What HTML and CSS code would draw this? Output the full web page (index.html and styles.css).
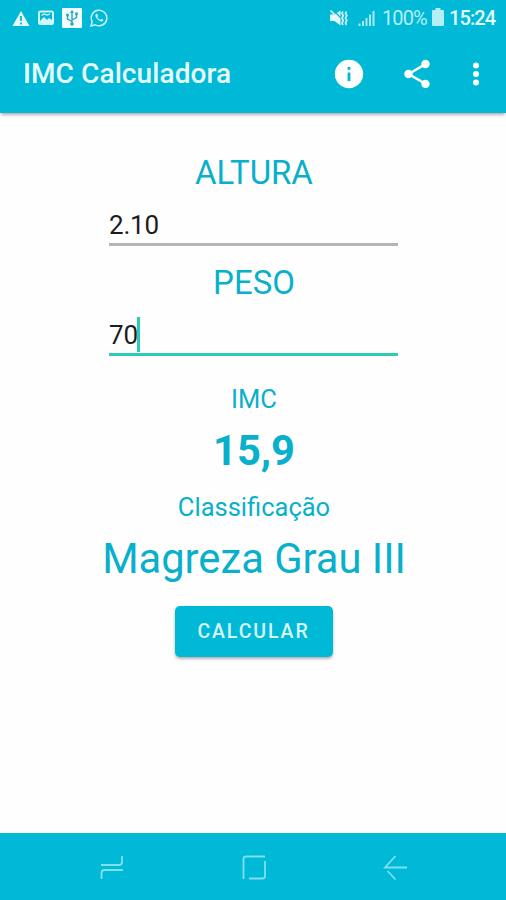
FILE: index.html
```html
<!DOCTYPE html>
<html lang="pt-BR">

<head>
    <meta charset="UTF-8">
    <meta name="viewport" content="width=device-width, initial-scale=1.0">
    <title>IMC Calculadora</title>
    <link rel="stylesheet" href="styles.css">
</head>

<body>
    <div class="status">
        <div class="status-icons">
            <svg width="18" height="17" viewBox="0 0 18 17">
                <path d="M9 1L17.5 16H.5z" fill="#e6fafd"/>
                <path d="M9 6v5M9 12.6v1.8" stroke="#00b9d7" stroke-width="1.8"/>
            </svg>
            <svg width="16" height="16" viewBox="0 0 16 16">
                <rect x="1" y="1.5" width="14" height="12.5" rx="1.5" fill="none" stroke="#d4f5fa" stroke-width="2"/>
                <path d="M2 11l4-4 3 3 2-2 3 2v3H2z" fill="#d4f5fa"/>
                <path d="M3.5 5.5L6 4l3 1 3-1" fill="none" stroke="#d4f5fa" stroke-width="1.2"/>
            </svg>
            <svg width="20" height="20" viewBox="0 0 20 20">
                <rect width="20" height="20" rx="1" fill="#f2fdff"/>
                <path d="M10 4v12M10 13.5L5.5 11V7M10 12l4.5-2.5V6" fill="none" stroke="#2ca6bb" stroke-width="1.4"/>
                <path d="M10 1.8L12 5H8z" fill="#2ca6bb"/>
                <circle cx="10" cy="16" r="1.8" fill="#2ca6bb"/>
                <circle cx="5.5" cy="7" r="1.5" fill="#2ca6bb"/>
                <path d="M13.2 4.500h2.600v2.600h-2.600z" fill="#2ca6bb"/>
            </svg>
            <svg width="18" height="18" viewBox="0 0 18 18">
                <path d="M1 17l1.200-4.300A7.800 7.800 0 1 1 5.300 15.800z" fill="none" stroke="#c8f1f8" stroke-width="1.500"/>
                <path d="M6.200 4.800c-1.500 1-1 3 .8 5s4 3.400 5.600 2.400c1-.7.700-1.500.4-1.700l-1.600-.8-1.200 1C9 10.300 8 9.300 7.400 8l.8-1-.7-1.800c-.2-.5-.8-.6-1.300-.4z" fill="#c8f1f8"/>
            </svg>
        </div>
        <div class="status-info">
            <svg width="19" height="18" viewBox="0 0 19 18">
                <path d="M1 5.500h4.500l6-4v15l-6-4.500H1z" fill="#e2fafd"/>
                <path d="M4.500 1.500l7.500 7.500" stroke="#00b9d7" stroke-width="1.200"/>
                <path d="M1.500 1.500l4 4" stroke="#e2fafd" stroke-width="1.600"/>
                <path d="M14 2.500L13 4.500l1.300 2L13 9l1.300 2.500L13 14l1 2M17.500 2.500l-1 2 1.300 2L16.500 9l1.300 2.500-1.300 2.500 1 2" fill="none" stroke="#c8f3f9" stroke-width="1.700"/>
            </svg>
            <svg class="signal" width="17" height="17" viewBox="0 0 17 17">
                <path d="M1.500 16v-2.500M5 16v-5M8.500 16V8M12 16V4.500M15.500 16V1" stroke="#a8e9f3" stroke-width="2"/>
            </svg>
            <span class="percent">100%</span>
            <svg class="battery" width="12" height="18" viewBox="0 0 12 18">
                <path d="M3.500 0h5v2H11a1 1 0 0 1 1 1v14a1 1 0 0 1-1 1H1a1 1 0 0 1-1-1V3a1 1 0 0 1 1-1h2.500z" fill="#b5eef6"/>
            </svg>
            <span class="clock">15:24</span>
        </div>
    </div>

    <header class="toolbar">
        <h1 class="title">IMC Calculadora</h1>
        <div class="actions">
            <svg width="34" height="34" viewBox="0 0 24 24" fill="#fff">
                <path d="M12 2a10 10 0 1 0 0 20 10 10 0 0 0 0-20zm1 15h-2v-6h2zm0-8h-2V7h2z"/>
            </svg>
            <svg width="34" height="34" viewBox="0 0 24 24" fill="#fff">
                <path d="M18 16.080c-.76 0-1.440.3-1.960.770L8.910 12.700c.05-.230.090-.460.090-.700s-.04-.470-.09-.700l7.050-4.110c.54.5 1.250.810 2.040.810 1.660 0 3-1.340 3-3s-1.340-3-3-3-3 1.340-3 3c0 .240.040.470.090.700L8.040 9.810C7.500 9.310 6.790 9 6 9c-1.660 0-3 1.340-3 3s1.340 3 3 3c.79 0 1.500-.31 2.040-.81l7.120 4.160c-.05.210-.08.430-.08.650 0 1.610 1.310 2.920 2.920 2.920s2.920-1.310 2.920-2.920-1.310-2.920-2.920-2.920z"/>
            </svg>
            <svg width="34" height="34" viewBox="0 0 24 24" fill="#fff">
                <circle cx="12" cy="6" r="2.100"/>
                <circle cx="12" cy="12" r="2.100"/>
                <circle cx="12" cy="18" r="2.100"/>
            </svg>
        </div>
    </header>

    <main class="content">
        <div class="label">ALTURA</div>
        <div class="field">2.10</div>
        <div class="label peso">PESO</div>
        <div class="field active">70<span class="cursor"></span></div>
        <div class="caption">IMC</div>
        <div class="result bold">15,9</div>
        <div class="caption class-caption">Classificação</div>
        <div class="result">Magreza Grau III</div>
        <button class="calcular">CALCULAR</button>
    </main>

    <nav class="navbar">
        <svg width="26" height="28" viewBox="0 0 26 28">
            <path d="M2 12h18q3 0 3-3V3M2.500 26v-6q0-3 3-3H24"/>
        </svg>
        <svg width="26" height="28" viewBox="0 0 26 28">
            <path d="M2.500 26V6q0-2.500 2.500-2.500h19M24 8v15q0 2.500-2.500 2.500H8"/>
        </svg>
        <svg width="26" height="28" viewBox="0 0 26 28">
            <path d="M13.500 3L3 14.500H25M5.500 18l8 8.500"/>
        </svg>
    </nav>
</body>

</html>
```

FILE: styles.css
```css
* {
    box-sizing: border-box;
}
body {
    margin: 0;
    height: 900px;
    display: flex;
    flex-direction: column;
    background: #fefefe;
    font-family: Roboto, "Liberation Sans", sans-serif;
    color: #08b0cb;
}
svg {
    display: block;
    flex: none;
}
.status {
    height: 36px;
    padding: 0 11px 0 12px;
    display: flex;
    justify-content: space-between;
    align-items: center;
    background: #00b9d7;
}
.status-icons {
    display: flex;
    align-items: center;
    gap: 8px;
}
.status-info {
    display: flex;
    align-items: center;
    font-size: 20px;
    line-height: 36px;
}
.signal {
    margin: 0 7px 0 10px;
}
.percent {
    width: 44px;
    letter-spacing: -0.9px;
    color: #b5eef6;
}
.battery {
    margin: 0 5px 2px 6px;
}
.clock {
    width: 46px;
    font-weight: 500;
    letter-spacing: -0.9px;
    color: #e2fafd;
}
.toolbar {
    height: 77px;
    padding: 0 13px 1px 23px;
    display: flex;
    justify-content: space-between;
    align-items: center;
    background: #00b9d7;
    box-shadow: 0 3px 3px -1px rgba(0, 0, 0, 0.3);
}
.title {
    margin: 0;
    font-size: 28px;
    font-weight: 500;
    line-height: 34px;
    letter-spacing: 0.1px;
    color: #e6fbfd;
}
.actions {
    display: flex;
    gap: 34px;
}
.actions svg:last-child {
    margin-left: -9px;
}
.content {
    flex: 1;
    padding: 39px 0 0 2px;
    display: flex;
    flex-direction: column;
    align-items: center;
}
.label {
    font-size: 33px;
    line-height: 42px;
}
.peso {
    margin-top: 16px;
}
.field {
    width: 289px;
    height: 52px;
    padding-top: 16px;
    margin-right: 1px;
    display: flex;
    font-size: 26px;
    line-height: 31px;
    letter-spacing: -0.2px;
    color: #1c1c1c;
    border-bottom: 3px solid #b5b5b5;
}
.active {
    border-color: #2ccbb8;
}
.cursor {
    width: 3px;
    height: 35px;
    margin: -3px 0 0 -1px;
    background: #2ccbb8;
}
.caption {
    margin-top: 28px;
    font-size: 25.5px;
    line-height: 31px;
}
.result {
    margin-top: 11px;
    font-size: 41.7px;
    line-height: 50px;
}
.bold {
    font-weight: 700;
}
.class-caption {
    margin-top: 16px;
}
.calcular {
    width: 158px;
    height: 51px;
    margin: 22px 1px 0 0;
    padding: 0;
    border: 0;
    border-radius: 5px;
    background: #00b9d7;
    box-shadow: 0 2px 3px rgba(0, 0, 0, 0.3);
    font-family: inherit;
    font-size: 19.5px;
    font-weight: 500;
    letter-spacing: 1.9px;
    color: #d8f7fb;
}
.navbar {
    height: 67px;
    padding: 0 98px 0 99px;
    display: flex;
    justify-content: space-between;
    align-items: center;
    background: #00b9d7;
}
.navbar path {
    fill: none;
    stroke: #7fe0ee;
    stroke-width: 1.8;
}
```
